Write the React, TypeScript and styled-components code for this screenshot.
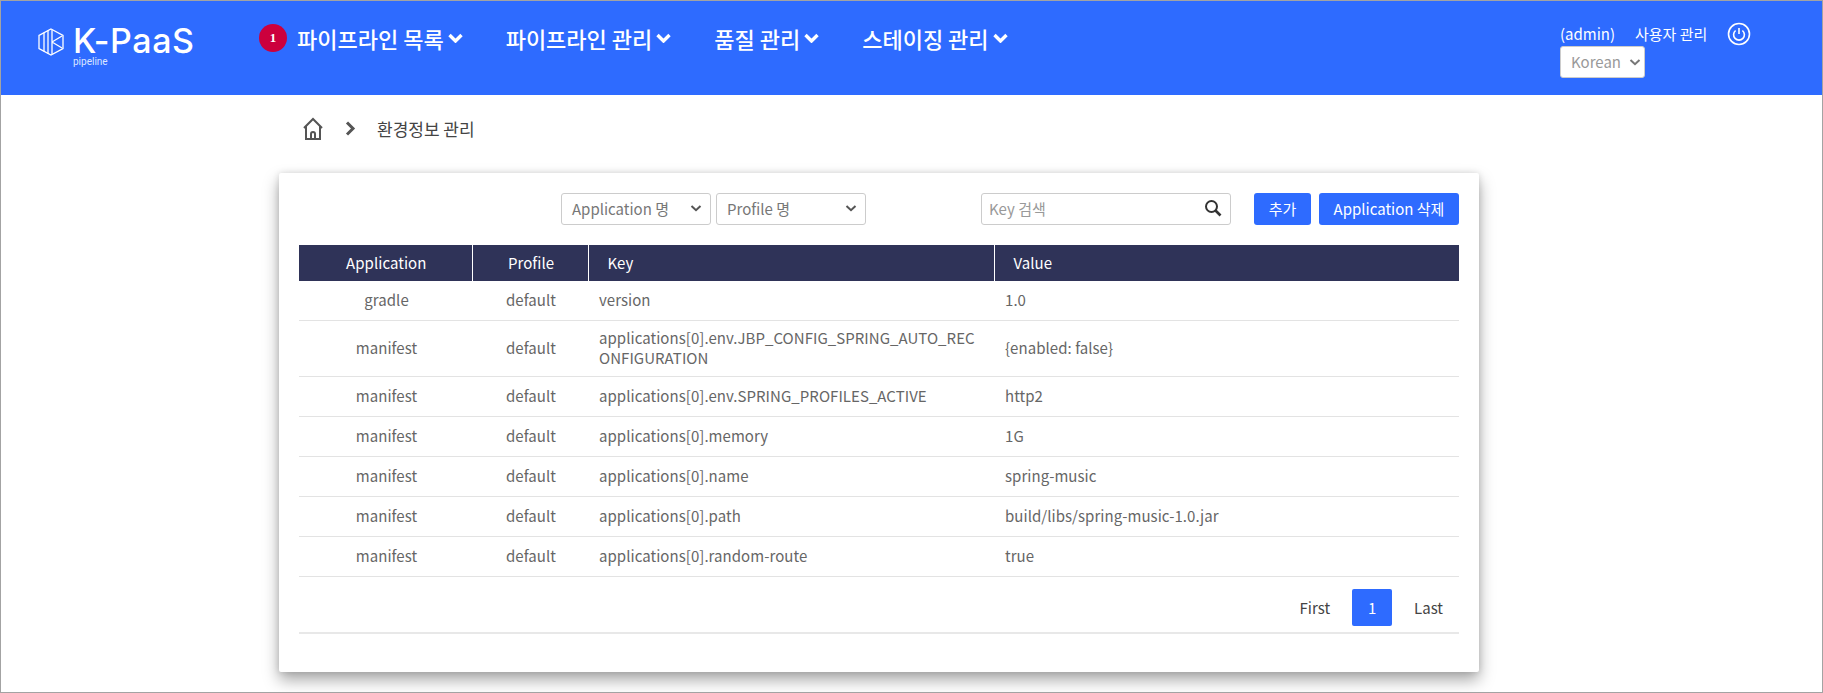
import React from "react";
import styled, { createGlobalStyle } from "styled-components";

const GlobalStyle = createGlobalStyle`
  html, body {
    margin: 0;
    padding: 0;
    background: #fff;
  }
  * {
    box-sizing: border-box;
  }
  body {
    font-family: "Noto Sans CJK KR", "Noto Sans", sans-serif;
    color: #555;
  }
`;

const Page = styled.div`
  width: 1823px;
  height: 693px;
  border: 1px solid #a3a3a3;
  overflow: hidden;
  background: #fff;
`;

const Header = styled.header`
  height: 94px;
  background: #2e6bff;
  display: flex;
  align-items: flex-start;
  color: #fff;
`;

const Logo = styled.div`
  width: 258px;
  padding: 23px 0 0 37px;
  display: flex;
  gap: 9px;
  flex: none;
`;

const MarkSvg = styled.svg`
  margin-top: 4px;
  flex: none;
`;

const LogoText = styled.div`
  display: flex;
  flex-direction: column;
`;

const LogoTitle = styled.span`
  font-family: Inter, sans-serif;
  font-size: 34px;
  font-weight: 500;
  line-height: 34px;
  letter-spacing: 0.6px;
`;

const LogoSub = styled.span`
  font-family: Roboto, sans-serif;
  font-size: 10px;
  line-height: 8px;
  color: #dbe6ff;
`;

const Nav = styled.nav`
  display: flex;
  align-items: center;
  height: 74px;
  flex: none;
`;

const Badge = styled.span`
  width: 28px;
  height: 28px;
  margin-right: 10px;
  border-radius: 50%;
  background: #cc003d;
  color: #fff;
  font-family: "Liberation Serif", serif;
  font-size: 13px;
  font-weight: 700;
  display: flex;
  align-items: center;
  justify-content: center;
`;

const NavItem = styled.a<{ $gap: number }>`
  display: flex;
  align-items: center;
  gap: 4px;
  margin-right: ${(p) => p.$gap}px;
  font-size: 22px;
  font-weight: 500;
  line-height: 28px;
  color: #fff;
`;

const UserArea = styled.div`
  margin-left: auto;
  width: 262px;
  flex: none;
  padding-top: 20px;
`;

const UserRow = styled.div`
  display: flex;
  align-items: center;
  height: 25px;
  font-size: 15px;
  color: #fff;
`;

const UserName = styled.span`
  width: 75px;
`;

const UserLink = styled.span`
  width: 92px;
`;

const LangSelect = styled.div`
  width: 85px;
  height: 32px;
  padding: 0 3px 1px 10px;
  background: #fff;
  border: 1px solid #ccc;
  border-radius: 3px;
  display: flex;
  align-items: center;
  justify-content: space-between;
  font-size: 15px;
  color: #999;
`;

const Breadcrumb = styled.div`
  display: flex;
  align-items: center;
  height: 78px;
  padding: 0 0 11px 302px;
  font-size: 17px;
  color: #444;
`;

const Crumb = styled.span`
  margin-left: 21px;
`;

const Chevron = styled.span`
  display: flex;
  margin-left: 22px;
`;

const Card = styled.section`
  width: 1200px;
  height: 499px;
  margin-left: 278px;
  padding: 20px 20px 0 20px;
  background: #fff;
  border-radius: 2px;
  box-shadow: 0 8px 16px rgba(0, 0, 0, 0.35), 0 0 6px rgba(0, 0, 0, 0.12);
`;

const Toolbar = styled.div`
  display: flex;
  align-items: center;
  height: 32px;
  padding-left: 262px;
`;

const Dropdown = styled.div`
  width: 150px;
  height: 32px;
  margin-right: 5px;
  padding: 0 8px 2px 10px;
  border: 1px solid #ccc;
  border-radius: 3px;
  display: flex;
  align-items: center;
  justify-content: space-between;
  font-size: 15px;
  color: #777;
`;

const SearchBox = styled.div`
  width: 250px;
  height: 32px;
  margin-left: 110px;
  padding: 0 8px 2px 7px;
  border: 1px solid #ccc;
  border-radius: 3px;
  display: flex;
  align-items: center;
  justify-content: space-between;
  font-size: 15px;
  color: #999;
`;

const Button = styled.button<{ $width: number; $gap: number }>`
  width: ${(p) => p.$width}px;
  height: 32px;
  margin-left: ${(p) => p.$gap}px;
  padding: 0 0 1px;
  border: none;
  border-radius: 3px;
  background: #2e6bff;
  color: #fff;
  font-family: inherit;
  font-size: 15px;
`;

const Table = styled.table`
  width: 1160px;
  margin-top: 20px;
  border-collapse: collapse;
  table-layout: fixed;
  font-size: 15px;
  letter-spacing: 0.05px;
`;

const HeadCell = styled.th<{ $left?: boolean; $width?: number }>`
  width: ${(p) => (p.$width ? `${p.$width}px` : "auto")};
  height: 36px;
  padding: ${(p) => (p.$left ? "0 0 2px 19px" : "0 0 2px 2px")};
  background: #2f3358;
  color: #fff;
  font-size: 15px;
  font-weight: 400;
  text-align: ${(p) => (p.$left ? "left" : "center")};
  border-right: 1px solid #fff;

  &:last-child {
    border-right: none;
  }
`;

const Row = styled.tr<{ $height: number }>`
  height: ${(p) => p.$height}px;
  border-bottom: 1px solid #e3e3e3;
`;

const Cell = styled.td<{ $left?: boolean }>`
  padding: ${(p) => (p.$left ? "0 12px 0 11px" : "0 0 0 2px")};
  color: #666;
  line-height: 20px;
  text-align: ${(p) => (p.$left ? "left" : "center")};
  word-break: break-all;
`;

const Pager = styled.div`
  width: 1160px;
  height: 57px;
  display: flex;
  align-items: center;
  justify-content: flex-end;
  padding: 6px 16px 0 0;
  border-bottom: 2px solid #e8e8e8;
  font-size: 15px;
  color: #444;
`;

const PageCurrent = styled.span`
  width: 40px;
  height: 37px;
  margin: 0 22px;
  border-radius: 2px;
  background: #2e6bff;
  color: #fff;
  display: flex;
  align-items: center;
  justify-content: center;
`;

const rows = [
  { app: "gradle", key: "version", value: "1.0", height: 39 },
  {
    app: "manifest",
    key: "applications[0].env.JBP_CONFIG_SPRING_AUTO_RECONFIGURATION",
    value: "{enabled: false}",
    height: 56,
  },
  { app: "manifest", key: "applications[0].env.SPRING_PROFILES_ACTIVE", value: "http2", height: 40 },
  { app: "manifest", key: "applications[0].memory", value: "1G", height: 40 },
  { app: "manifest", key: "applications[0].name", value: "spring-music", height: 40 },
  { app: "manifest", key: "applications[0].path", value: "build/libs/spring-music-1.0.jar", height: 40 },
  { app: "manifest", key: "applications[0].random-route", value: "true", height: 40 },
];

const SelectArrow = ({ color }: { color: string }) => (
  <svg width="12" height="8" viewBox="0 0 12 8" fill="none">
    <path d="M1.5 2 6 6.2 10.5 2" stroke={color} strokeWidth="2" />
  </svg>
);

const NavArrow = () => (
  <svg width="15" height="10" viewBox="0 0 15 10" fill="none">
    <path d="M1.5 2 7.5 8 13.5 2" stroke="#fff" strokeWidth="3.4" />
  </svg>
);

const LogoMark = () => (
  <MarkSvg width="26" height="28" viewBox="0 0 26 28" fill="none" stroke="#fff" strokeWidth="1.3">
    <path d="M13 1 25 7.5v13L13 27 1 20.5v-13z" />
    <path d="M6 4.5v19M10 2.5v23M14 2v24M14 14l10-6M14 14l10 6" />
  </MarkSvg>
);

const HomeIcon = () => (
  <svg width="20" height="24" viewBox="0 0 20 24" fill="none" stroke="#555" strokeWidth="2">
    <path d="M1 11 10 2l9 9M3 9v13h14V9" />
    <path d="M8 22v-5a2 2 0 0 1 4 0v5" />
  </svg>
);

const PowerIcon = () => (
  <svg width="24" height="24" viewBox="0 0 24 24" fill="none" stroke="#fff" strokeWidth="1.6">
    <circle cx="12" cy="12" r="10.5" />
    <path d="M8.6 8.5a5.4 5.4 0 1 0 6.8 0M12 6v6" />
  </svg>
);

const SearchIcon = () => (
  <svg width="18" height="18" viewBox="0 0 18 18" fill="none" stroke="#333" strokeWidth="2">
    <circle cx="7.5" cy="7.5" r="5.5" />
    <path d="m11.5 11.5 5 5" strokeWidth="2.6" />
  </svg>
);

export default function App() {
  return (
    <Page>
      <GlobalStyle />
      <Header>
        <Logo>
          <LogoMark />
          <LogoText>
            <LogoTitle>K-PaaS</LogoTitle>
            <LogoSub>pipeline</LogoSub>
          </LogoText>
        </Logo>
        <Nav>
          <Badge>1</Badge>
          <NavItem $gap={43}>
            파이프라인 목록
            <NavArrow />
          </NavItem>
          <NavItem $gap={43}>
            파이프라인 관리
            <NavArrow />
          </NavItem>
          <NavItem $gap={43}>
            품질 관리
            <NavArrow />
          </NavItem>
          <NavItem $gap={0}>
            스테이징 관리
            <NavArrow />
          </NavItem>
        </Nav>
        <UserArea>
          <UserRow>
            <UserName>(admin)</UserName>
            <UserLink>사용자 관리</UserLink>
            <PowerIcon />
          </UserRow>
          <LangSelect>
            Korean
            <SelectArrow color="#777" />
          </LangSelect>
        </UserArea>
      </Header>
      <Breadcrumb>
        <HomeIcon />
        <Chevron>
          <svg width="11" height="15" viewBox="0 0 11 15" fill="none">
            <path d="M2 1.5 8 7.5 2 13.5" stroke="#555" strokeWidth="3" />
          </svg>
        </Chevron>
        <Crumb>환경정보 관리</Crumb>
      </Breadcrumb>
      <Card>
        <Toolbar>
          <Dropdown>
            Application 명
            <SelectArrow color="#555" />
          </Dropdown>
          <Dropdown>
            Profile 명
            <SelectArrow color="#555" />
          </Dropdown>
          <SearchBox>
            Key 검색
            <SearchIcon />
          </SearchBox>
          <Button $width={57} $gap={23}>
            추가
          </Button>
          <Button $width={140} $gap={8}>
            Application 삭제
          </Button>
        </Toolbar>
        <Table>
          <thead>
            <tr>
              <HeadCell $width={173}>Application</HeadCell>
              <HeadCell $width={116}>Profile</HeadCell>
              <HeadCell $left $width={406}>
                Key
              </HeadCell>
              <HeadCell $left>Value</HeadCell>
            </tr>
          </thead>
          <tbody>
            {rows.map((row) => (
              <Row key={row.key} $height={row.height}>
                <Cell>{row.app}</Cell>
                <Cell>default</Cell>
                <Cell $left>{row.key}</Cell>
                <Cell $left>{row.value}</Cell>
              </Row>
            ))}
          </tbody>
        </Table>
        <Pager>
          First
          <PageCurrent>1</PageCurrent>
          Last
        </Pager>
      </Card>
    </Page>
  );
}
